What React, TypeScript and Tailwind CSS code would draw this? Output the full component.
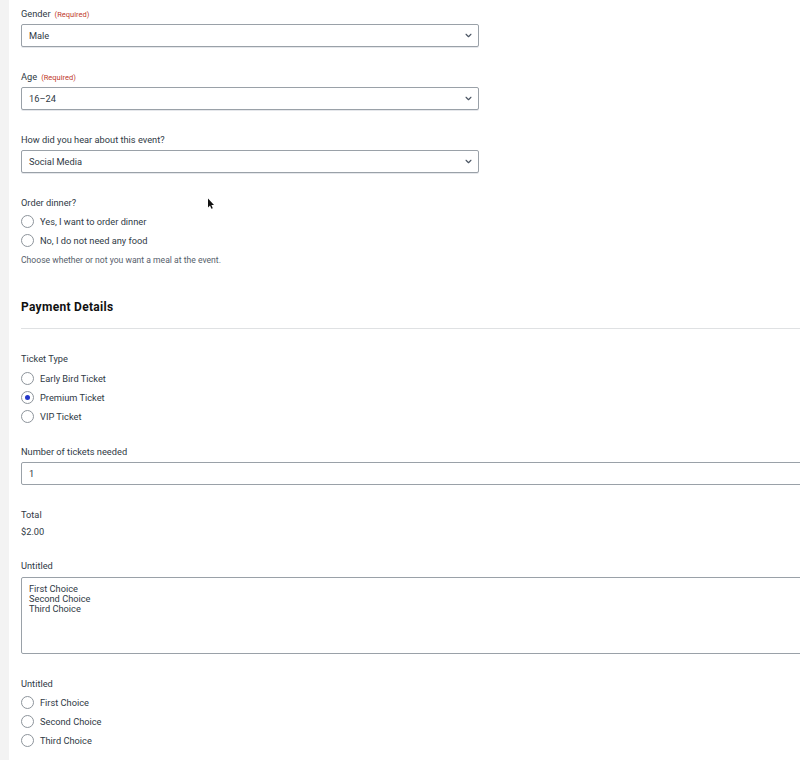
import React from "react";

function Label({ children, req }: { children: React.ReactNode; req?: boolean }) {
  return (
    <div className="h-[14px] leading-[14px] text-[9.25px] text-[#2f3a45] whitespace-nowrap">
      {children}
      {req && <span className="ml-[4px] text-[7.5px] text-[#c0392b]">(Required)</span>}
    </div>
  );
}

function Chevron() {
  return (
    <svg className="absolute right-[6px] top-[7px]" width="7" height="7" viewBox="0 0 10 10" fill="none" stroke="#4b5563" strokeWidth="1.6" strokeLinecap="round" strokeLinejoin="round">
      <path d="M1.5 3.2 5 6.8 8.5 3.2" />
    </svg>
  );
}

function SelectBox({ value }: { value: string }) {
  return (
    <div className="relative mt-[3px] mb-[23px] h-[23px] w-[458px] rounded-[2px] border border-[#9aa1a8] bg-white pl-[7px] text-[9.25px] leading-[22px] text-[#2f3a45] shadow-[0_1px_0_#e5e7eb]">
      {value}
      <Chevron />
    </div>
  );
}

function Radio({ label, checked }: { label: string; checked?: boolean }) {
  return (
    <div className="flex h-[19px] items-center gap-[6px] text-[9.25px] text-[#2f3a45] whitespace-nowrap">
      <span className="flex h-[13px] w-[13px] items-center justify-center rounded-full border border-[#8d949b] bg-white">
        {checked && <span className="h-[5px] w-[5px] rounded-full bg-[#2437c9]" />}
      </span>
      <span className="pt-[1px]">{label}</span>
    </div>
  );
}

export default function App() {
  return (
    <div className="relative flex h-[760px] w-[800px] overflow-hidden bg-white font-['Roboto',sans-serif]">
      <div className="w-[9px] shrink-0 bg-[#f3f3f3]" />
      <main className="w-[1000px] shrink-0 pl-[12px] pt-[7px]">
        <Label req>Gender</Label>
        <SelectBox value="Male" />
        <Label req>Age</Label>
        <SelectBox value="16–24" />
        <Label>How did you hear about this event?</Label>
        <SelectBox value="Social Media" />

        <Label>Order dinner?</Label>
        <div className="mt-[2px]">
          <Radio label="Yes, I want to order dinner" />
          <Radio label="No, I do not need any food" />
        </div>
        <p className="mt-[3px] h-[14px] text-[8.6px] leading-[14px] text-[#56606b]">
          Choose whether or not you want a meal at the event.
        </p>

        <h2 className="mt-[31px] h-[18px] text-[12px] font-bold leading-[18px] tracking-[0.3px] text-[#111]">Payment Details</h2>
        <hr className="mt-[12px] mb-[23px] border-0 border-t border-[#dfe1e3]" />

        <Label>Ticket Type</Label>
        <div className="mt-[3px]">
          <Radio label="Early Bird Ticket" />
          <Radio label="Premium Ticket" checked />
          <Radio label="VIP Ticket" />
        </div>

        <div className="mt-[19px]">
          <Label>Number of tickets needed</Label>
        </div>
        <div className="mt-[3px] mb-[23px] h-[23px] rounded-[2px] border border-[#9aa1a8] bg-white pl-[7px] text-[9.25px] leading-[22px] text-[#2f3a45]">1</div>

        <Label>Total</Label>
        <div className="mt-[2px] h-[16px] text-[9.25px] leading-[16px] text-[#2f3a45]">$2.00</div>

        <div className="mt-[19px]">
          <Label>Untitled</Label>
        </div>
        <textarea
          readOnly
          defaultValue={"First Choice\nSecond Choice\nThird Choice"}
          className="mt-[4px] mb-[23px] block h-[77px] w-full resize-none rounded-[2px] border border-[#9aa1a8] bg-white pl-[7px] pt-[6px] text-[9.25px] leading-[10px] text-[#2f3a45] outline-none"
        />

        <Label>Untitled</Label>
        <div className="mt-[2px]">
          <Radio label="First Choice" />
          <Radio label="Second Choice" />
          <Radio label="Third Choice" />
        </div>
      </main>
      <svg className="absolute left-[207px] top-[198px]" width="8" height="12" viewBox="0 0 8 12">
        <path d="M1 0.5 V9.5 L3 7.6 L4.4 10.8 L5.8 10.2 L4.4 7 H7 Z" fill="#111" />
      </svg>
    </div>
  );
}
